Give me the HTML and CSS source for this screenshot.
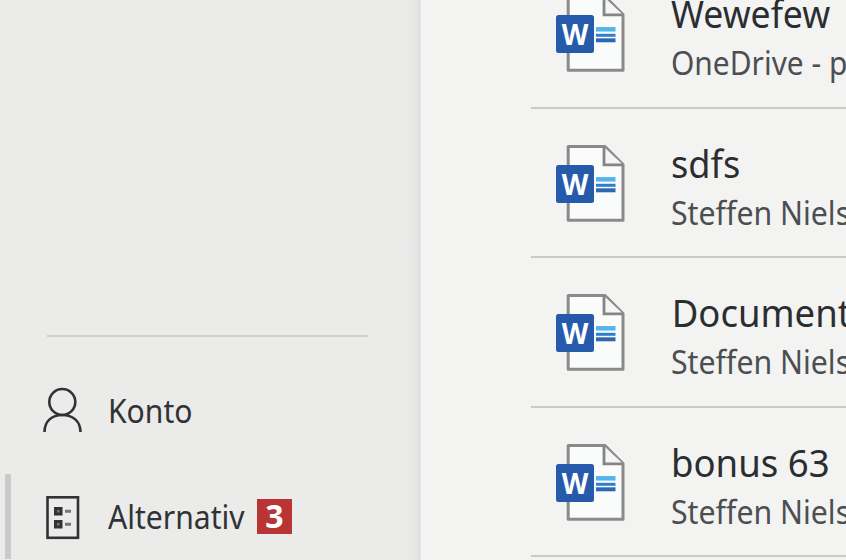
FILE: index.html
```
<!DOCTYPE html>
<html lang="da">
<head>
<meta charset="utf-8">
<title>Word</title>
<link rel="stylesheet" href="styles.css">
</head>
<body>
<svg width="0" height="0" class="defs">
  <symbol id="doc" viewBox="0 0 72 80">
    <path d="M14.200 2.500H51L69 20.500V76.200H14.200Z" fill="#fafbfb" stroke="#8a8a8a" stroke-width="3" stroke-linejoin="round"/>
    <path d="M50 3V20.800H69" fill="#f4f5f5" stroke="#858585" stroke-width="2.800"/>
    <path d="M42 35.300H61.500" stroke="#55b5ea" stroke-width="4.500"/>
    <path d="M42 41.300H61.500" stroke="#2f7fce" stroke-width="3"/>
    <path d="M42 46.300H61.500" stroke="#2c68b4" stroke-width="4"/>
    <rect x="2" y="21" width="38" height="38" rx="2.500" fill="#265bab"/>
    <text x="7.700" y="50.500" class="w" textLength="26.600" lengthAdjust="spacingAndGlyphs">W</text>
  </symbol>
</svg>
<div class="app">
  <aside class="sidebar">
    <hr class="divider">
    <nav>
      <a class="item">
        <svg class="icon" viewBox="0 0 44 48"><circle cx="22.300" cy="15" r="13" /><path d="M4.500 45C4.500 34 12 28 22.300 28S40.500 34 40.500 45"/></svg>
        <span class="label">Konto</span>
      </a>
      <a class="item active">
        <svg class="icon" viewBox="0 0 44 48"><rect x="7.500" y="4.300" width="30.500" height="40.500"/><path class="boxes" d="M15.500 15.500h5.500v5.500h-5.500zM15.500 28.500h5.500v5.500h-5.500z"/><path class="dash" d="M25 18.300h6M25 31.300h6"/></svg>
        <span class="label">Alternativ</span>
        <span class="badge">3</span>
      </a>
    </nav>
  </aside>
  <main class="files">
    <div class="row"><svg class="doc"><use href="#doc"/></svg><div class="text"><div class="title"><span class="t1">Wewefew</span></div><div class="sub"><span class="s1">OneDrive - p</span></div></div></div>
    <div class="row"><svg class="doc"><use href="#doc"/></svg><div class="text"><div class="title"><span class="t2">sdfs</span></div><div class="sub"><span class="s2">Steffen Niels</span></div></div></div>
    <div class="row"><svg class="doc"><use href="#doc"/></svg><div class="text"><div class="title"><span class="t3">Document</span></div><div class="sub"><span class="s2">Steffen Niels</span></div></div></div>
    <div class="row"><svg class="doc"><use href="#doc"/></svg><div class="text"><div class="title"><span class="t4">bonus 63</span></div><div class="sub"><span class="s2">Steffen Niels</span></div></div></div>
  </main>
</div>
</body>
</html>
```
FILE: styles.css
```
* { box-sizing: border-box; }
body { margin: 0; overflow: hidden; font-family: "Noto Sans", "Open Sans", sans-serif; background: #f3f3f2; }
.defs { display: block; height: 0; }
.app { display: flex; width: 846px; height: 560px; overflow: hidden; }
.sidebar { width: 421px; flex: none; padding-top: 335px; background: linear-gradient(90deg, #ebebea 408px, #e5e5e5 417px, #dedede 419px, #e1e1e1 420px, #eeeeed 421px); }
.divider { margin: 0 53px 0 47px; border: 0; height: 2px; background: #cfcfce; }
.item { display: flex; align-items: center; height: 85px; padding-left: 40px; margin-top: 31px; }
.item + .item { margin-top: 21px; height: 85px; }
.active { border-left: 6px solid #cacaca; margin-left: 5px; padding-left: 29px; }
.icon { width: 44px; height: 48px; flex: none; fill: none; stroke: #303234; stroke-width: 2.600; }
.icon .boxes { stroke-width: 3; fill: #777; }
.icon .dash { stroke: #777; stroke-width: 3; }
.label { width: 150px; margin: 1px 0 0 24px; flex: none; font-size: 32px; line-height: 44px; color: #303336; white-space: nowrap; transform: scaleX(.94); transform-origin: 0 50%; }
.badge { width: 35px; height: 35px; margin: -1px 0 0 -1px; background: #b83534; color: #fff; font: bold 32px/33px "Noto Sans", sans-serif; text-align: center; }
.files { flex: 1; margin-left: 110px; min-width: 0; overflow: hidden; height: 691px; margin-top: -41px; }
.row { display: flex; height: 149.500px; border-bottom: 2px solid #c9c9c9; padding-left: 23px; }
.doc { width: 72px; height: 80px; margin-top: 35px; flex: none; }
.w { fill: #fff; font: bold 29px "Noto Sans", sans-serif; }
.text { margin-left: 45px; padding-top: 28px; white-space: nowrap; }
.title { height: 53px; font-size: 38px; line-height: 52px; color: #2b2e31; }
.sub { height: 45px; font-size: 32px; line-height: 45px; color: #4c4f52; }
.text span { display: inline-block; transform-origin: 0 50%; }
.t1 { transform: scaleX(.935); }
.t2 { transform: scaleX(.95); }
.t3 { transform: translateX(.7px) scaleX(.96); }
.t4 { transform: scaleX(.962); }
.s1 { transform: scaleX(.935); }
.s2 { transform: scaleX(.945); }
```
